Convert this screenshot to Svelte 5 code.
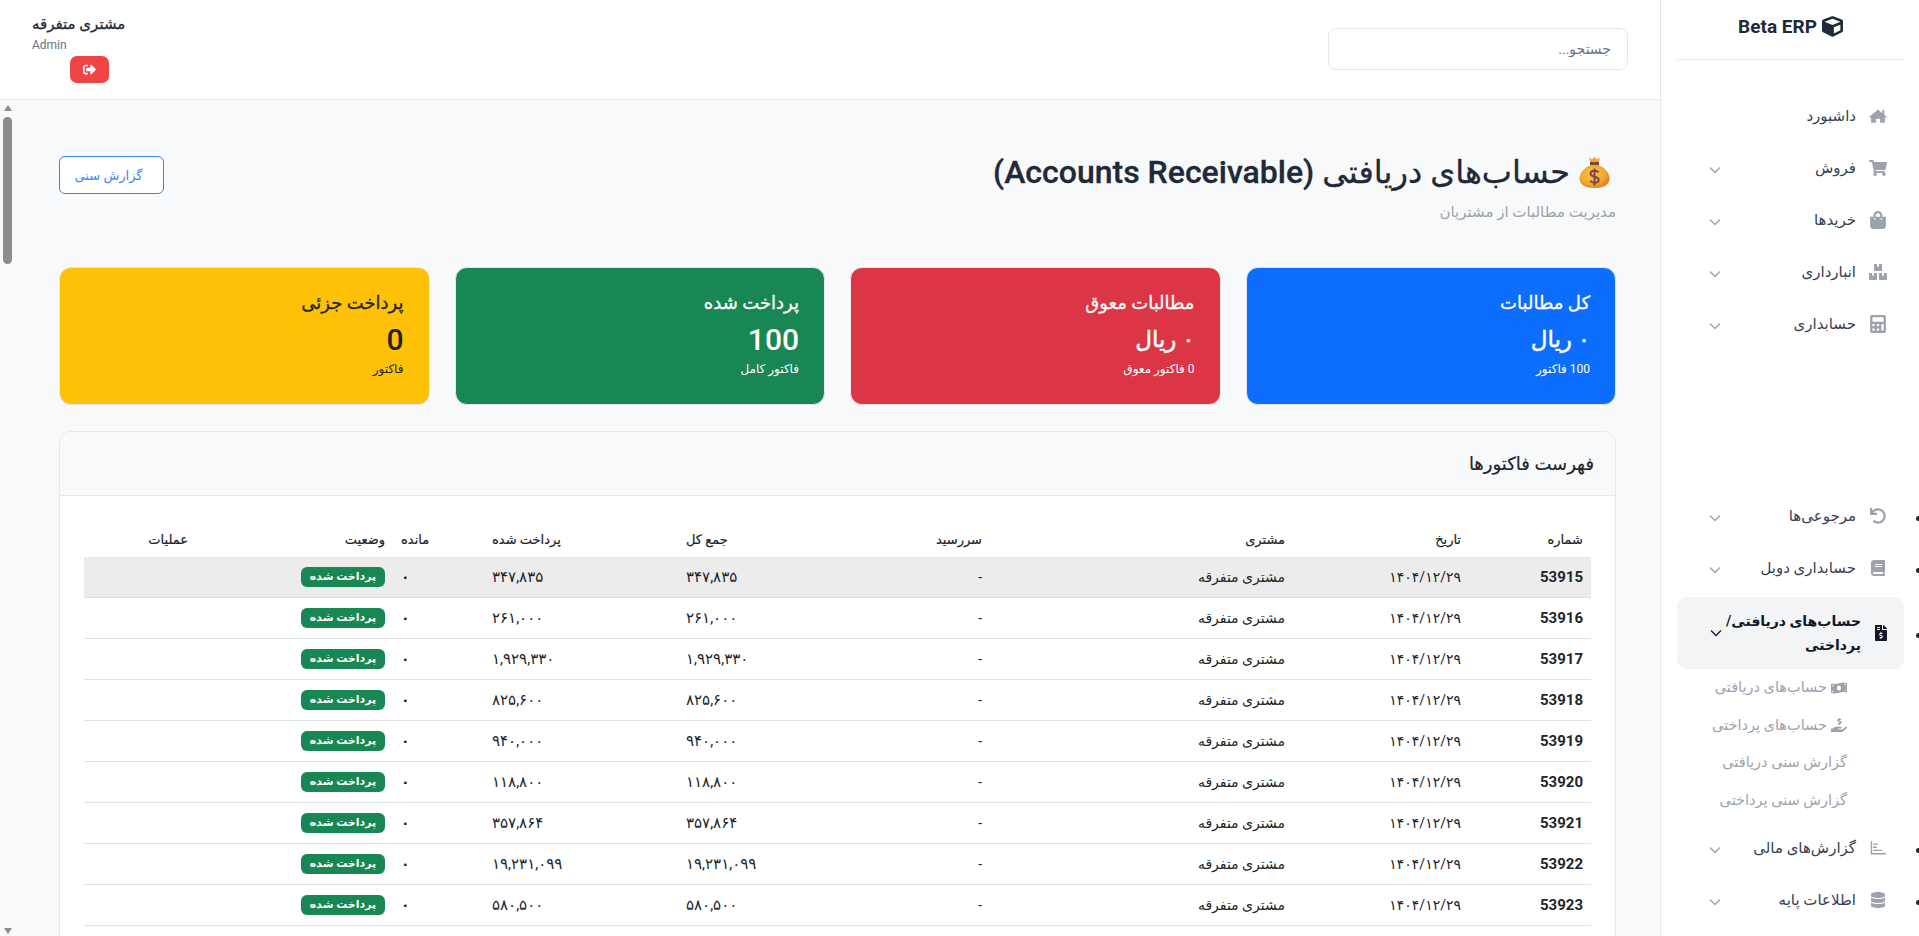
<script>
  const fa = n => String(n).replace(/\B(?=(\d{3})+$)/g, ',').replace(/\d/g, d => '۰۱۲۳۴۵۶۷۸۹'[d])

  const icons = {
    home: ['0 0 576 512', 'M288 44L4 284l30 34 34-29v179h152V340h136v128h152V289l34 29 30-34-84-71V64h-64v105z'],
    cart: ['0 0 576 512', 'M528.12 301.319l47.273-208C578.806 78.301 567.391 64 551.99 64H159.208l-9.166-44.81C147.758 8.021 137.93 0 126.529 0H24C10.745 0 0 10.745 0 24v16c0 13.255 10.745 24 24 24h69.883l70.248 343.435C147.325 417.1 136 435.222 136 456c0 30.928 25.072 56 56 56s56-25.072 56-56c0-15.674-6.447-29.835-16.824-40h209.647C430.447 426.165 424 440.326 424 456c0 30.928 25.072 56 56 56s56-25.072 56-56c0-22.172-12.888-41.332-31.579-50.405l5.517-24.276c3.413-15.018-8.002-29.319-23.403-29.319H218.117l-6.545-32h293.145c11.206 0 20.92-7.754 23.403-18.681z'],
    bag: ['0 0 448 512', 'M352 160v-32C352 57.42 294.579 0 224 0 153.42 0 96 57.42 96 128v32H0v272c0 44.183 35.817 80 80 80h288c44.183 0 80-35.817 80-80V160h-96zm-192-32c0-35.29 28.71-64 64-64s64 28.71 64 64v32H160v-32zm160 120c-13.255 0-24-10.745-24-24s10.745-24 24-24 24 10.745 24 24-10.745 24-24 24zm-192 0c-13.255 0-24-10.745-24-24s10.745-24 24-24 24 10.745 24 24-10.745 24-24 24z'],
    boxes: ['0 0 576 512', 'M560 288h-80v96l-32-21.3-32 21.3v-96h-80c-8.8 0-16 7.2-16 16v192c0 8.8 7.2 16 16 16h224c8.8 0 16-7.2 16-16V304c0-8.8-7.2-16-16-16zm-384-64h224c8.8 0 16-7.2 16-16V16c0-8.8-7.2-16-16-16h-80v96l-32-21.3L256 96V0h-80c-8.8 0-16 7.2-16 16v192c0 8.8 7.2 16 16 16zm64 64h-80v96l-32-21.3L96 384v-96H16c-8.8 0-16 7.2-16 16v192c0 8.8 7.2 16 16 16h224c8.8 0 16-7.2 16-16V304c0-8.8-7.2-16-16-16z'],
    calc: ['0 0 448 512', 'M400 0H48C22.4 0 0 22.4 0 48v416c0 25.6 22.4 48 48 48h352c25.6 0 48-22.4 48-48V48c0-25.6-22.4-48-48-48zM128 435.2c0 6.4-6.4 12.8-12.8 12.8H76.8c-6.4 0-12.8-6.4-12.8-12.8v-38.4c0-6.4 6.4-12.8 12.8-12.8h38.4c6.4 0 12.8 6.4 12.8 12.8v38.4zm0-128c0 6.4-6.4 12.8-12.8 12.8H76.8c-6.4 0-12.8-6.4-12.8-12.8v-38.4c0-6.4 6.4-12.8 12.8-12.8h38.4c6.4 0 12.8 6.4 12.8 12.8v38.4zm128 128c0 6.4-6.4 12.8-12.8 12.8h-38.4c-6.4 0-12.8-6.4-12.8-12.8v-38.4c0-6.4 6.4-12.8 12.8-12.8h38.4c6.4 0 12.8 6.4 12.8 12.8v38.4zm0-128c0 6.4-6.4 12.8-12.8 12.8h-38.4c-6.4 0-12.8-6.4-12.8-12.8v-38.4c0-6.4 6.4-12.8 12.8-12.8h38.4c6.4 0 12.8 6.4 12.8 12.8v38.4zm128 128c0 6.4-6.4 12.8-12.8 12.8h-38.4c-6.4 0-12.8-6.4-12.8-12.8V268.8c0-6.4 6.4-12.8 12.8-12.8h38.4c6.4 0 12.8 6.4 12.8 12.8v166.4zm0-256c0 6.4-6.4 12.8-12.8 12.8H76.8c-6.4 0-12.8-6.4-12.8-12.8V76.8C64 70.4 70.4 64 76.8 64h294.4c6.4 0 12.8 6.4 12.8 12.8v102.4z'],
    undo: ['0 0 512 512', 'M212.333 224.333H12c-6.627 0-12-5.373-12-12V12C0 5.373 5.373 0 12 0h48c6.627 0 12 5.373 12 12v78.112C117.773 39.279 184.26 7.47 258.175 8.007c136.906.994 246.448 111.623 246.157 248.532C504.041 393.258 393.12 504 256.333 504c-64.089 0-122.496-24.313-166.51-64.215-5.099-4.622-5.334-12.554-.467-17.42l33.967-33.967c4.474-4.474 11.662-4.717 16.401-.525C170.76 415.336 211.58 432 256.333 432c97.268 0 176-78.716 176-176 0-97.267-78.716-176-176-176-58.496 0-110.28 28.476-142.274 72.333h98.274c6.627 0 12 5.373 12 12v48c0 6.627-5.373 12-12 12z'],
    book: ['0 0 448 512', 'M448 360V24c0-13.3-10.7-24-24-24H96C43 0 0 43 0 96v320c0 53 43 96 96 96h328c13.3 0 24-10.7 24-24v-16c0-7.5-3.5-14.3-8.9-18.7-4.2-15.4-4.2-59.3 0-74.7 5.4-4.3 8.9-11.1 8.9-18.6zM128 134c0-3.3 2.7-6 6-6h212c3.3 0 6 2.7 6 6v20c0 3.3-2.7 6-6 6H134c-3.3 0-6-2.7-6-6v-20zm0 64c0-3.3 2.7-6 6-6h212c3.3 0 6 2.7 6 6v20c0 3.3-2.7 6-6 6H134c-3.3 0-6-2.7-6-6v-20zm253.4 250H96c-17.7 0-32-14.3-32-32 0-17.6 14.4-32 32-32h285.4c-1.9 17.1-1.9 46.9 0 64z'],
    invoice: ['0 0 384 512', 'M377 105L279.1 7c-4.5-4.5-10.6-7-17-7H256v128h128v-6.1c0-6.3-2.5-12.4-7-16.9zm-153 31V0H24C10.7 0 0 10.7 0 24v464c0 13.3 10.7 24 24 24h336c13.3 0 24-10.7 24-24V160H248c-13.2 0-24-10.8-24-24zM64 72c0-4.42 3.58-8 8-8h80c4.42 0 8 3.58 8 8v16c0 4.42-3.58 8-8 8H72c-4.42 0-8-3.58-8-8V72zm0 80v-16c0-4.42 3.58-8 8-8h80c4.42 0 8 3.58 8 8v16c0 4.42-3.58 8-8 8H72c-4.42 0-8-3.58-8-8zm144 263.88V440c0 4.42-3.58 8-8 8h-16c-4.42 0-8-3.58-8-8v-24.29c-11.29-.58-22.27-4.52-31.37-11.35-3.9-2.93-4.1-8.77-.57-12.14l11.75-11.21c2.77-2.64 6.89-2.76 10.13-.73 3.87 2.42 8.26 3.72 12.82 3.72h28.11c6.5 0 11.8-5.92 11.8-13.19 0-5.95-3.61-11.19-8.77-12.73l-45-13.5c-18.59-5.58-31.58-23.42-31.58-43.39 0-24.52 19.05-44.44 42.67-45.07V232c0-4.42 3.58-8 8-8h16c4.42 0 8 3.58 8 8v24.29c11.29.58 22.27 4.51 31.37 11.35 3.9 2.93 4.1 8.77.57 12.14l-11.75 11.21c-2.77 2.64-6.89 2.76-10.13.73-3.87-2.43-8.26-3.72-12.82-3.72h-28.11c-6.5 0-11.8 5.92-11.8 13.19 0 5.95 3.61 11.19 8.77 12.73l45 13.5c18.59 5.58 31.58 23.42 31.58 43.39 0 24.53-19.05 44.44-42.67 45.07z'],
    chart: ['0 0 512 512', 'M24 32h44v384h444v44H24z M96 110h150v44H96z M96 210h120v44H96z M96 310h290v44H96z'],
    db: ['0 0 448 512', 'M448 73.143v45.714C448 159.143 347.667 192 224 192S0 159.143 0 118.857V73.143C0 32.857 100.333 0 224 0s224 32.857 224 73.143zM448 176v102.857C448 319.143 347.667 352 224 352S0 319.143 0 278.857V176c48.125 33.143 136.208 48.572 224 48.572S399.874 209.143 448 176zm0 160v102.857C448 479.143 347.667 512 224 512S0 479.143 0 438.857V336c48.125 33.143 136.208 48.572 224 48.572S399.874 369.143 448 336z'],
    bill: ['0 0 640 512', 'M621.16 54.46C582.37 38.19 543.55 32 504.75 32c-123.17-.01-246.33 62.34-369.5 62.34-30.89 0-61.76-3.92-92.65-13.72-3.47-1.1-6.95-1.62-10.35-1.62C15.04 79 0 92.32 0 110.81v317.26c0 12.63 7.23 24.6 18.84 29.46C57.63 473.81 96.45 480 135.25 480c123.17 0 246.34-62.35 369.51-62.35 30.89 0 61.76 3.92 92.65 13.72 3.47 1.1 6.95 1.62 10.35 1.62 17.21 0 32.25-13.32 32.25-31.81V83.93c-.01-12.64-7.24-24.6-18.85-29.47zM48 132.22c20.12 5.04 41.12 7.57 62.72 8.93C104.84 170.54 79 192.69 48 192.69v-60.47zm0 285v-47.78c34.37 0 62.18 27.27 63.71 61.4-22.53-1.81-43.59-6.31-63.71-13.62zM320 352c-44.19 0-80-42.99-80-96 0-53.02 35.82-96 80-96s80 42.98 80 96c0 53.03-35.83 96-80 96zm272 27.78c-17.52-4.39-35.71-6.85-54.32-8.44 5.87-26.08 27.5-45.88 54.32-49.28v57.72zm0-236.11c-30.89-3.91-54.86-29.7-55.81-61.55 19.54 2.17 38.09 6.23 55.81 12.66v48.89z'],
    hand: ['0 0 576 512', 'M271.06,144.3l54.27,14.3a8.59,8.59,0,0,1,6.63,8.1c0,4.6-4.09,8.4-9.12,8.4h-35.6a30,30,0,0,1-11.19-2.2c-5.24-2.2-11.28-1.7-15.3,2l-19,17.5a11.68,11.68,0,0,0-2.25,2.66,11.42,11.42,0,0,0,3.88,15.74,83.42,83.42,0,0,0,34.51,11.5V240c0,8.8,7.83,16,17.37,16h17.37c9.55,0,17.38-7.2,17.38-16V222.4c32.93-3.6,57.84-31,53.5-63-3.15-23-22.46-41.3-46.56-47.7L282.68,97.4a8.59,8.59,0,0,1-6.63-8.1c0-4.6,4.09-8.4,9.12-8.4h35.6A30,30,0,0,1,332,83.1c5.23,2.2,11.28,1.7,15.3-2l19-17.5A11.31,11.31,0,0,0,368.47,61a11.43,11.43,0,0,0-3.84-15.78,83.82,83.82,0,0,0-34.52-11.5V16c0-8.8-7.82-16-17.37-16H295.37C285.82,0,278,7.2,278,16V33.6c-32.89,3.6-57.85,31-53.51,63C227.63,119.6,247,137.9,271.06,144.3ZM565.27,328.1c-11.8-10.7-30.2-10-42.6,0L430.27,402a63.64,63.64,0,0,1-40,14H272a16,16,0,0,1,0-32h78.29c15.9,0,30.71-10.9,33.25-26.6a31.2,31.2,0,0,0,.46-5.46A32,32,0,0,0,352,320H192a117.66,117.66,0,0,0-74.1,26.29L71.4,384H16A16,16,0,0,0,0,400v96a16,16,0,0,0,16,16H372.77a64,64,0,0,0,40-14L564,377a32,32,0,0,0,1.28-48.9Z'],
    cube: ['0 0 512 512', 'M239.1 6.3l-208 78c-18.7 7-31.1 25-31.1 45v225.1c0 18.2 10.3 34.8 26.5 42.9l208 104c13.5 6.8 29.4 6.8 42.9 0l208-104c16.3-8.1 26.5-24.8 26.5-42.9V129.3c0-20-12.4-37.9-31.1-44.9l-208-78C262 2.2 250 2.2 239.1 6.3zM256 68.4l192 72v1.1l-192 78-192-78v-1.1l192-72zm32 356V275.5l160-65v133.9l-160 80z'],
    logout: ['0 0 512 512', 'M497 273L329 441c-15 15-41 4.5-41-17v-96H152c-13.3 0-24-10.7-24-24v-96c0-13.3 10.7-24 24-24h136V88c0-21.4 25.9-32 41-17l168 168c9.3 9.4 9.3 24.6 0 34zM192 436v-40c0-6.6-5.4-12-12-12H96c-17.7 0-32-14.3-32-32V160c0-17.7 14.3-32 32-32h84c6.6 0 12-5.4 12-12V76c0-6.6-5.4-12-12-12H96c-53 0-96 43-96 96v192c0 53 43 96 96 96h84c6.6 0 12-5.4 12-12z']
  }

  const topNav = [
    { icon: 'home', label: 'داشبورد' },
    { icon: 'cart', label: 'فروش', arrow: true },
    { icon: 'bag', label: 'خریدها', arrow: true },
    { icon: 'boxes', label: 'انبارداری', arrow: true },
    { icon: 'calc', label: 'حسابداری', arrow: true }
  ]

  const subNav = [
    { icon: 'bill', label: 'حساب‌های دریافتی' },
    { icon: 'hand', label: 'حساب‌های پرداختی' },
    { label: 'گزارش سنی دریافتی' },
    { label: 'گزارش سنی پرداختی' }
  ]

  const cards = [
    { cls: 'blue', title: 'کل مطالبات', value: '۰ ریال', rial: true, sub: '100 فاکتور' },
    { cls: 'red', title: 'مطالبات معوق', value: '۰ ریال', rial: true, sub: '0 فاکتور معوق' },
    { cls: 'green', title: 'پرداخت شده', value: '100', sub: 'فاکتور کامل' },
    { cls: 'yellow', title: 'پرداخت جزئی', value: '0', sub: 'فاکتور' }
  ]

  const invoices = [
    [53915, 347835], [53916, 261000], [53917, 1929330], [53918, 825600], [53919, 940000],
    [53920, 118800], [53921, 357864], [53922, 19231099], [53923, 580500]
  ]
</script>

{#snippet icon(name, size)}
  <svg class="ico" viewBox={icons[name][0]} style="width:{size}px;height:{size}px" fill="currentColor"><path d={icons[name][1]} /></svg>
{/snippet}

{#snippet chevron()}
  <svg class="chev" viewBox="0 0 12 8" fill="none" stroke="currentColor" stroke-width="1.3"><path d="M1 1.5l5 5 5-5" /></svg>
{/snippet}

<div class="app" dir="rtl">
  <aside class="sidebar">
    <div class="logo">
      {@render icon('cube', 21)}
      <span>Beta ERP</span>
    </div>

    <ul class="nav plain">
      {#each topNav as item}
        <li>
          <a href="#top" class="item">
            <span class="icon-box">{@render icon(item.icon, 18)}</span>
            <span class="label">{item.label}</span>
            {#if item.arrow}{@render chevron()}{/if}
          </a>
        </li>
      {/each}
    </ul>

    <ul class="nav bullets">
      <li>
        <a href="#top" class="item">
          <span class="icon-box">{@render icon('undo', 16)}</span>
          <span class="label">مرجوعی‌ها</span>
          {@render chevron()}
        </a>
      </li>
      <li>
        <a href="#top" class="item">
          <span class="icon-box">{@render icon('book', 16)}</span>
          <span class="label">حسابداری دوبل</span>
          {@render chevron()}
        </a>
      </li>
      <li>
        <a href="#top" class="item active">
          <span class="icon-box">{@render icon('invoice', 16)}</span>
          <span class="label">حساب‌های دریافتی/پرداختی</span>
          {@render chevron()}
        </a>
        <div class="sub">
          {#each subNav as s}
            <a href="#top" class="sub-item">
              {#if s.icon}{@render icon(s.icon, 16)}{/if}
              <span>{s.label}</span>
            </a>
          {/each}
        </div>
      </li>
      <li>
        <a href="#top" class="item">
          <span class="icon-box">{@render icon('chart', 16)}</span>
          <span class="label">گزارش‌های مالی</span>
          {@render chevron()}
        </a>
      </li>
      <li>
        <a href="#top" class="item">
          <span class="icon-box">{@render icon('db', 16)}</span>
          <span class="label">اطلاعات پایه</span>
          {@render chevron()}
        </a>
      </li>
    </ul>
  </aside>

  <div class="main">
    <header class="topbar">
      <input class="search" type="text" placeholder="جستجو..." />
      <div class="user">
        <div class="name">مشتری متفرقه</div>
        <div class="role">Admin</div>
        <button class="logout" aria-label="خروج">{@render icon('logout', 13)}</button>
      </div>
    </header>

    <div class="body">
      <div class="content">
        <div class="page-head">
          <div>
            <h1>
              <svg class="bag" viewBox="0 0 31 32">
                <defs>
                  <radialGradient id="bagfill" cx="0.42" cy="0.4" r="0.68">
                    <stop offset="0" stop-color="#fbc740" />
                    <stop offset="0.65" stop-color="#f2a62c" />
                    <stop offset="1" stop-color="#d9741a" />
                  </radialGradient>
                </defs>
                <path d="M10 1.5l3 1.8L15.500 1l2.500 2.300 3-1.800-1.500 5.500h-8z" fill="#f4a62a" />
                <path d="M11 6h9v3.500h-9z" fill="#6e4a3e" />
                <path d="M11.500 9C5 12 .5 17 .5 22.500 .5 29 7 32 15.500 32s15-3 15-9.500C30.500 17 26 12 19.500 9z" fill="url(#bagfill)" />
                <path d="M19.500 16.500c-.8-1.200-2.200-1.800-4-1.800-2.400 0-4 1.200-4 3 0 4 8.200 2 8.200 6 0 1.900-1.800 3-4.200 3-1.900 0-3.400-.7-4.300-2M15.500 12.500v17" fill="none" stroke="#7a4650" stroke-width="2" />
              </svg>
              <span>حساب‌های دریافتی (Accounts Receivable)</span>
            </h1>
            <p>مدیریت مطالبات از مشتریان</p>
          </div>
          <button class="report">گزارش سنی</button>
        </div>

        <div class="cards">
          {#each cards as c}
            <div class="card {c.cls}">
              <h3>{c.title}</h3>
              <div class="value" class:rial={c.rial}>{c.value}</div>
              <small>{c.sub}</small>
            </div>
          {/each}
        </div>

        <section class="panel">
          <div class="panel-head">فهرست فاکتورها</div>
          <div class="panel-body">
            <table>
              <colgroup>
                <col style="width:122px" /><col style="width:176px" /><col style="width:303px" />
                <col style="width:110px" /><col style="width:202px" /><col style="width:194px" />
                <col style="width:91px" /><col style="width:197px" /><col style="width:112px" />
              </colgroup>
              <thead>
                <tr>
                  <th>شماره</th><th>تاریخ</th><th>مشتری</th><th>سررسید</th><th class="end">جمع کل</th>
                  <th class="end">پرداخت شده</th><th class="end">مانده</th><th>وضعیت</th><th>عملیات</th>
                </tr>
              </thead>
              <tbody>
                {#each invoices as [id, total], i}
                  <tr class:hover={i === 0}>
                    <td class="num">{id}</td>
                    <td>۱۴۰۴/۱۲/۲۹</td>
                    <td>مشتری متفرقه</td>
                    <td>-</td>
                    <td class="end money">{fa(total)}</td>
                    <td class="end money">{fa(total)}</td>
                    <td class="end zero">۰</td>
                    <td><span class="badge">پرداخت شده</span></td>
                    <td></td>
                  </tr>
                {/each}
              </tbody>
            </table>
          </div>
        </section>
      </div>

      <div class="scrollbar" aria-hidden="true">
        <span class="up"></span>
        <span class="thumb"></span>
        <span class="down"></span>
      </div>
    </div>
  </div>
</div>

<style>
  :global(body) {
    margin: 0;
    overflow: hidden;
    font-family: Roboto, "DejaVu Sans", sans-serif;
    color: #1f2937;
  }

  .app {
    display: flex;
    height: 936px;
    overflow: hidden;
  }

  .ico {
    display: block;
    flex: none;
  }

  .sidebar {
    width: 259px;
    flex: none;
    box-sizing: border-box;
    padding: 0 15px 0 16px;
    background: #fff;
    border-left: 1px solid #e5e7eb;
  }

  .logo {
    height: 60px;
    box-sizing: border-box;
    display: flex;
    align-items: center;
    justify-content: center;
    gap: 5px;
    padding-bottom: 6px;
    border-bottom: 1px solid #e5e7eb;
    font-size: 19px;
    font-weight: 700;
    color: #1f2937;
  }

  .nav {
    margin: 0;
    padding: 0;
  }

  .plain {
    list-style: none;
    margin-top: 33px;
  }

  .bullets {
    list-style: disc;
    margin-top: 146px;
  }

  .nav li {
    margin-bottom: 6px;
  }

  .item {
    display: flex;
    align-items: center;
    min-height: 46px;
    padding: 0 16px 0 32px;
    border-radius: 10px;
    font-size: 15px;
    color: #374151;
    text-decoration: none;
  }

  .icon-box {
    width: 20px;
    flex: none;
    display: flex;
    justify-content: center;
    color: #9ca3af;
    margin-left: 12px;
  }

  .label {
    flex: 1;
    line-height: 24px;
  }

  .chev {
    width: 12px;
    height: 8px;
    flex: none;
    color: #9ca3af;
    margin-top: 4px;
  }

  .active {
    min-height: 72px;
    padding: 0 13px 0 33px;
    background: #f3f4f6;
    color: #111827;
    font-size: 14px;
    font-weight: 600;
  }

  .active .icon-box {
    color: #111827;
    margin-left: 10px;
  }

  .active .chev {
    color: #111827;
    margin-top: 0;
  }

  .sub {
    padding-right: 57px;
  }

  .sub-item {
    display: flex;
    align-items: center;
    gap: 4px;
    height: 37.5px;
    font-size: 14.5px;
    color: #9ca3af;
    text-decoration: none;
    white-space: nowrap;
  }

  .main {
    flex: 1;
    min-width: 0;
    display: flex;
    flex-direction: column;
  }

  .topbar {
    height: 100px;
    flex: none;
    box-sizing: border-box;
    display: flex;
    justify-content: space-between;
    align-items: flex-start;
    padding: 0 32px;
    background: #fff;
    border-bottom: 1px solid #e5e7eb;
  }

  .search {
    width: 300px;
    height: 42px;
    box-sizing: border-box;
    margin-top: 28px;
    padding: 0 16px;
    border: 1px solid #e5e7eb;
    border-radius: 8px;
    font: 14px Roboto, "DejaVu Sans", sans-serif;
    background: #fff;
    outline: none;
  }

  .search::placeholder {
    color: #6b7280;
  }

  .user {
    padding-top: 13px;
  }

  .name {
    font-size: 15px;
    line-height: 22px;
    font-weight: 500;
    -webkit-text-stroke: 0.3px currentColor;
    color: #1f2937;
  }

  .role {
    font-size: 12px;
    line-height: 20px;
    color: #6b7280;
    text-align: left;
  }

  .logout {
    display: flex;
    align-items: center;
    justify-content: center;
    width: 39px;
    height: 27px;
    margin: 1px 16px 0 0;
    padding: 0;
    border: 0;
    border-radius: 7px;
    background: #ef4444;
    color: #fff;
  }

  .body {
    flex: 1;
    min-height: 0;
    display: flex;
    overflow: hidden;
    background: #f8f9fb;
  }

  .content {
    flex: 1;
    min-width: 0;
    padding: 56px 44px 0;
  }

  .scrollbar {
    width: 15px;
    flex: none;
    display: flex;
    flex-direction: column;
    align-items: center;
    padding: 5px 0 2px;
    box-sizing: border-box;
  }

  .thumb {
    width: 9px;
    height: 147px;
    margin-top: 6px;
    border-radius: 5px;
    background: #8c8c8c;
  }

  .up, .down {
    width: 0;
    height: 0;
    border: 4.5px solid transparent;
    border-top-width: 0;
    border-bottom: 6px solid #8c8c8c;
  }

  .down {
    margin-top: auto;
    transform: rotate(180deg);
  }

  .page-head {
    display: flex;
    justify-content: space-between;
    align-items: flex-start;
    height: 111px;
  }

  h1 {
    display: flex;
    align-items: center;
    gap: 9px;
    margin: 0;
    padding-right: 6px;
    font-size: 32px;
    line-height: 32px;
    font-weight: 500;
    -webkit-text-stroke: 0.3px currentColor;
    color: #1f2937;
  }

  .bag {
    width: 31px;
    height: 32px;
    flex: none;
  }

  .page-head p {
    margin: 15px 0 0;
    font-size: 15px;
    color: #9ca3af;
  }

  .report {
    width: 105px;
    height: 38px;
    padding: 0 6px 0 0;
    border: 1px solid #3b82f6;
    border-radius: 6px;
    background: #fff;
    color: #3b82f6;
    font: 13px Roboto, "DejaVu Sans", sans-serif;
  }

  .cards {
    display: grid;
    grid-template-columns: repeat(4, 1fr);
    gap: 25px;
    margin-bottom: 26px;
  }

  .card {
    height: 138px;
    box-sizing: border-box;
    padding: 22px 25px 0;
    border: 1px solid #e5e7eb;
    border-radius: 12px;
    color: #fff;
  }

  .card h3 {
    margin: 0;
    font-size: 18px;
    line-height: 26px;
    font-weight: 500;
    -webkit-text-stroke: 0.3px currentColor;
  }

  .card .value {
    font-size: 30px;
    line-height: 40px;
    font-weight: 500;
    margin-top: 4px;
  }

  .card .rial {
    font-size: 23px;
    -webkit-text-stroke: 0.5px currentColor;
  }

  .card small {
    display: block;
    font-size: 12px;
    line-height: 18px;
  }

  .blue { background: #0d6efd; }
  .red { background: #dc3545; }
  .green { background: #198754; }
  .yellow { background: #ffc107; color: #212529; }

  .panel {
    border: 1px solid #e5e7eb;
    border-radius: 12px;
    background: #fff;
    overflow: hidden;
  }

  .panel-head {
    height: 64px;
    box-sizing: border-box;
    padding: 0 21px;
    display: flex;
    align-items: center;
    background: #f8f9fa;
    border-bottom: 1px solid #e5e7eb;
    font-size: 18px;
    font-weight: 500;
    color: #212529;
    -webkit-text-stroke: 0.2px currentColor;
  }

  .panel-body {
    padding: 25px 24px 25px;
  }

  table {
    width: 1507px;
    table-layout: fixed;
    border-collapse: collapse;
    font-size: 14px;
    color: #212529;
  }

  th {
    height: 36px;
    padding: 0 8px;
    text-align: right;
    font-size: 13px;
    font-weight: 500;
    -webkit-text-stroke: 0.2px currentColor;
  }

  td {
    height: 40px;
    padding: 0 8px;
    border-bottom: 1px solid #dee2e6;
    white-space: nowrap;
  }

  th.end, td.end {
    text-align: left;
  }

  td.money {
    font-size: 15px;
  }

  td.zero {
    font-weight: 700;
  }

  tr.hover td {
    background: #ececec;
  }

  .num {
    font-size: 15px;
    font-weight: 700;
  }

  .badge {
    display: inline-block;
    width: 84px;
    height: 20px;
    line-height: 20px;
    border-radius: 6px;
    background: #198754;
    color: #fff;
    font-size: 11px;
    font-weight: 700;
    text-align: center;
  }
</style>
